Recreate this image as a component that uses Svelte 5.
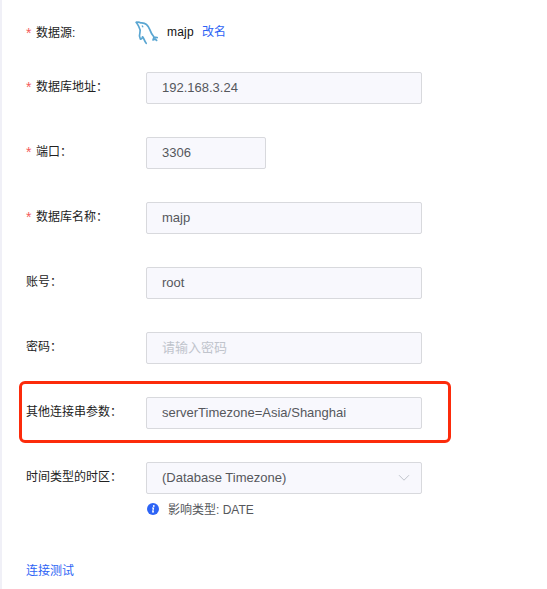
<script>
  const fields = [
    { label: '数据库地址', required: true, value: '192.168.3.24' },
    { label: '端口', required: true, value: '3306', short: true },
    { label: '数据库名称', required: true, value: 'majp' },
    { label: '账号', value: 'root' },
    { label: '密码', placeholder: '请输入密码' },
    { label: '其他连接串参数', value: 'serverTimezone=Asia/Shanghai', highlight: true },
    { label: '时间类型的时区', value: '(Database Timezone)', select: true },
  ];
</script>

<main lang="zh-CN">
  <div class="row source">
    <div class="label"><span class="star">*</span>数据源:</div>
    <svg class="logo" width="24" height="24" viewBox="0 0 24 24" fill="none" stroke="#5aa6d2" stroke-width="1.7" stroke-linecap="round" stroke-linejoin="round">
      <path d="M1.4 1.4C2.8.8 4.6 1.2 6 1.9C10 1.5 13.2 4.6 14.8 8.6C16 12 17.2 14 19 16L22.2 16.6M19 16L18 19L20 18L21.6 19.4" />
      <path d="M1.4 1.4C2.4 2.8 2.9 4 3.8 5.6C5 7.8 5.6 8.9 5 11C4.2 13.6 4.2 15.8 5.4 18.2C7.2 18.4 7 16.8 7.6 15.8C9.2 17.6 9.2 20 11.2 22.3" />
      <path d="M7.2 4.9L7.9 5.8" stroke-width="1.2" />
    </svg>
    <span class="name">majp</span>
    <span class="link">改名</span>
  </div>

  {#each fields as f}
    <div class="row">
      {#if f.highlight}<div class="highlight"></div>{/if}
      <div class="label">{#if f.required}<span class="star">*</span>{/if}{f.label}：</div>
      <div class="field" class:short={f.short} class:empty={!f.value}>
        <span>{f.value ?? f.placeholder}</span>
        {#if f.select}
          <svg width="12" height="8" viewBox="0 0 12 8" fill="none" stroke="#c0c4cc" stroke-width="1"><path d="M1 1.2L6 6.2L11 1.2" /></svg>
        {/if}
      </div>
    </div>
  {/each}

  <div class="hint">
    <svg width="12" height="12" viewBox="0 0 12 12">
      <circle cx="6" cy="6" r="6" fill="#2d64f5" />
      <circle cx="6.8" cy="3" r=".9" fill="#fff" />
      <path d="M5 5H6.5L5.7 8.8H7" fill="none" stroke="#fff" stroke-width="1.2" />
    </svg>
    <span>影响类型: DATE</span>
  </div>
  <div class="link test">连接测试</div>
</main>

<style>
  :global(body) { background: #fff; }
  main {
    box-sizing: border-box;
    height: 589px;
    padding: 16px 0 0 24px;
    border-left: 2px solid #f0f0f7;
    overflow: hidden;
    font: 12px/16px "Liberation Sans", "Noto Sans CJK SC", sans-serif;
    color: #222;
  }
  .row {
    position: relative;
    display: flex;
    align-items: center;
    height: 32px;
    margin-bottom: 33px;
  }
  .source { margin-bottom: 24px; }
  .label { width: 120px; flex: none; white-space: nowrap; margin-top: -2px; }
  .source .label { width: 109px; margin-top: 1px; }
  .star { display: inline-block; width: 10px; color: #f45b5b; font-size: 14px; line-height: 12px; vertical-align: -1px; }
  .logo { flex: none; margin-top: 2px; }
  .name { margin-left: 8px; width: 35px; color: #111; letter-spacing: .2px; }
  .link { color: #2d64f5; }
  .field {
    box-sizing: border-box;
    display: flex;
    align-items: center;
    justify-content: space-between;
    width: 276px;
    height: 32px;
    padding: 0 11px 0 15px;
    border: 1px solid #d8d9dd;
    border-radius: 2px;
    background: #f8f8fd;
    color: #55575c;
    font-size: 13px;
  }
  .short { width: 120px; }
  .empty { color: #c0c4cc; }
  .highlight {
    position: absolute;
    left: -7px;
    top: -16px;
    box-sizing: border-box;
    width: 432px;
    height: 62px;
    border: 3px solid #fc2b0b;
    border-radius: 6px;
  }
  .hint {
    display: flex;
    align-items: center;
    gap: 9px;
    margin: -25px 0 0 121px;
    height: 16px;
    color: #55575c;
  }
  .hint svg { margin-top: -2px; }
  .test { margin-top: 45px; }
</style>
